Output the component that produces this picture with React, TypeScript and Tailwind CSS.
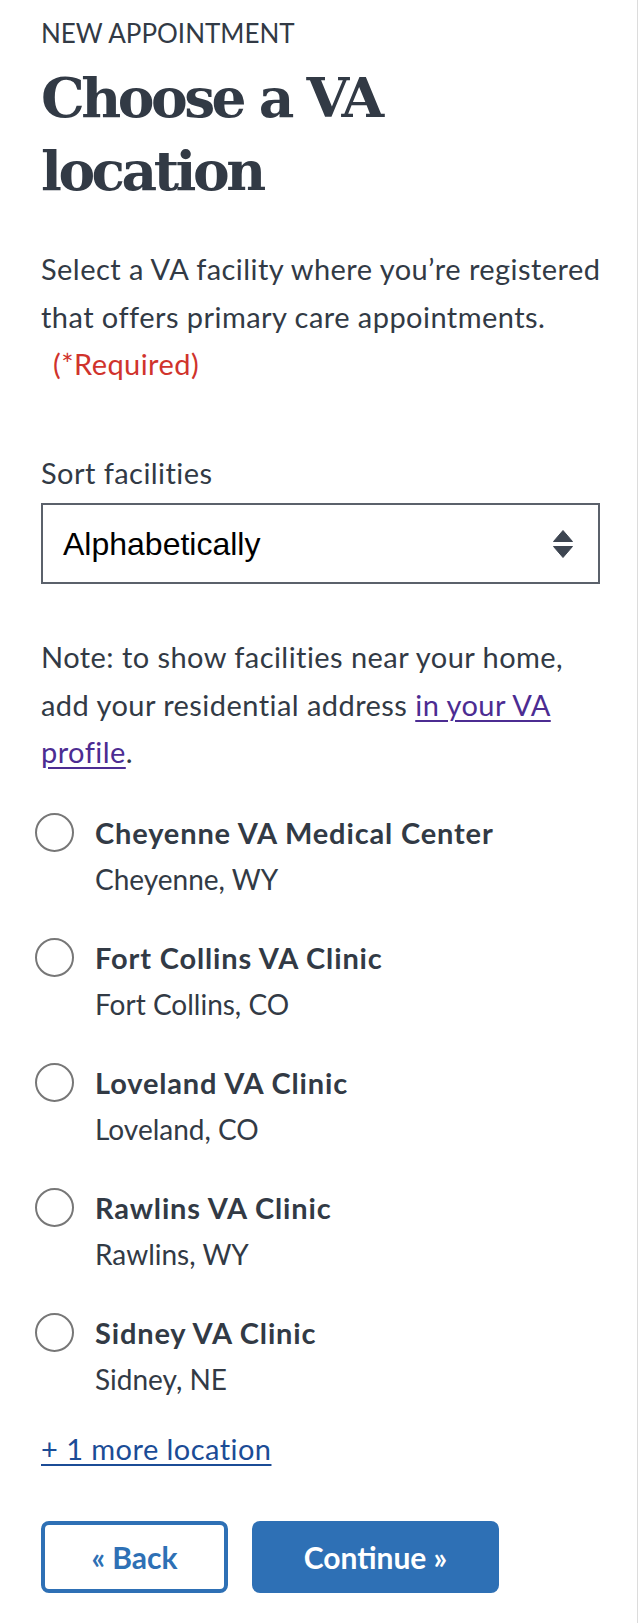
import React from 'react';

const body = { fontFamily: 'Lato, "Open Sans", sans-serif' };

const facilities = [
  { name: 'Cheyenne VA Medical Center', city: 'Cheyenne, WY' },
  { name: 'Fort Collins VA Clinic', city: 'Fort Collins, CO' },
  { name: 'Loveland VA Clinic', city: 'Loveland, CO' },
  { name: 'Rawlins VA Clinic', city: 'Rawlins, WY' },
  { name: 'Sidney VA Clinic', city: 'Sidney, NE' },
];

function SortArrows() {
  return (
    <svg width="20" height="28" viewBox="0 0 20 28" className="shrink-0">
      <path d="M10 0.5 L19.5 11.5 L0.5 11.5 Z" fill="#3d4551" strokeLinejoin="round" stroke="#3d4551" strokeWidth="1" />
      <path d="M10 27.5 L19.5 16.5 L0.5 16.5 Z" fill="#3d4551" strokeLinejoin="round" stroke="#3d4551" strokeWidth="1" />
    </svg>
  );
}

function FacilityOption({ name, city }: { name: string; city: string }) {
  return (
    <div className="flex items-start">
      <div className="ml-[-6px] mt-[3px] h-[39px] w-[39px] shrink-0 rounded-full border-2 border-[#777777] bg-white" />
      <div className="ml-[21px] leading-[46px] text-[#323a45]">
        <div className="text-[29px] font-bold tracking-[0.85px]">{name}</div>
        <div className="text-[28px]">{city}</div>
      </div>
    </div>
  );
}

export default function App() {
  return (
    <div className="w-[641px] bg-white">
      <div className="min-h-[1623px] w-[638px] border-r border-[#dcdcdc] pl-[41px] pt-[16px] text-[#323a45]" style={body}>
        <div className="w-[559px]">
          <div className="text-[26px] leading-[34px] uppercase">New appointment</div>

          <h1
            className="mt-[11px] text-[55px] leading-[73px] font-bold tracking-[-3.5px] text-[#323a45]"
            style={{ fontFamily: '"DejaVu Serif", "Liberation Serif", serif' }}
          >
            Choose a VA
            <br />
            location
          </h1>

          <p className="mt-[38px] text-[29px] leading-[47.5px] tracking-[0.45px] whitespace-nowrap">
            Select a VA facility where you’re registered
            <br />
            that offers primary care appointments.
            <br />
            <span className="ml-[12px] text-[#d0332c]">(*Required)</span>
          </p>

          <div className="mt-[61px] text-[29px] leading-[47.5px] tracking-[0.45px]">Sort facilities</div>

          <div className="mt-[7px] flex h-[81px] items-center justify-between border-2 border-[#5b616b] bg-white pl-[20px] pr-[25px]">
            <span className="text-[32px] text-black" style={{ fontFamily: '"Liberation Sans", Arial, sans-serif' }}>
              Alphabetically
            </span>
            <SortArrows />
          </div>

          <p className="mt-[49px] text-[29px] leading-[47.5px] tracking-[0.45px] whitespace-nowrap">
            Note: to show facilities near your home,
            <br />
            add your residential address{' '}
            <a href="#" className="text-[#4c2c92] underline decoration-2 underline-offset-[4px]">
              in your VA
              <br />
              profile
            </a>
            .
          </p>

          <div className="mt-[34px] flex flex-col gap-[33px]">
            {facilities.map(f => (
              <FacilityOption key={f.name} name={f.name} city={f.city} />
            ))}
          </div>

          <div className="mt-[23px] text-[29px] leading-[47.5px] tracking-[0.45px]">
            <a href="#" className="text-[#1b4c96] underline decoration-2 underline-offset-[4px]">
              + 1 more location
            </a>
          </div>

          <div className="mt-[49px] flex gap-[24px]">
            <button className="flex h-[72px] w-[187px] items-center justify-center rounded-[8px] border-4 border-[#2e70b5] bg-white text-[30px] font-bold text-[#2e70b5]">
              « Back
            </button>
            <button className="flex h-[72px] w-[247px] items-center justify-center rounded-[8px] bg-[#2e70b5] text-[30px] font-bold text-white">
              Continue »
            </button>
          </div>
        </div>
      </div>
    </div>
  );
}
